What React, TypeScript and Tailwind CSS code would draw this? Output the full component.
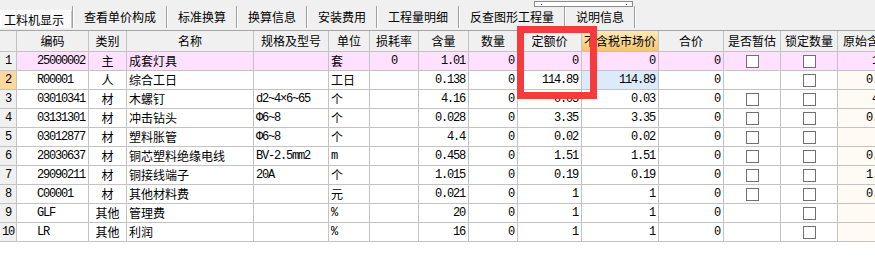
import * as React from "react";

type Row = {
  no: number;
  code: string;
  kind: string;
  name: string;
  spec: string;
  unit: string;
  loss: string;
  qty: string;
  amount: string;
  price: string;
  market: string;
  total: string;
  est: boolean;
  orig: string;
};

const rows: Row[] = [
  { no: 1, code: "25000002", kind: "主", name: "成套灯具", spec: "", unit: "套", loss: "0", qty: "1.01", amount: "0", price: "0", market: "0", total: "0", est: true, orig: "1.01" },
  { no: 2, code: "R00001", kind: "人", name: "综合工日", spec: "", unit: "工日", loss: "", qty: "0.138", amount: "0", price: "114.89", market: "114.89", total: "0", est: false, orig: "0.138" },
  { no: 3, code: "03010341", kind: "材", name: "木螺钉", spec: "d2~4×6~65", unit: "个", loss: "", qty: "4.16", amount: "0", price: "0.03", market: "0.03", total: "0", est: true, orig: "4.16" },
  { no: 4, code: "03131301", kind: "材", name: "冲击钻头", spec: "Φ6~8", unit: "个", loss: "", qty: "0.028", amount: "0", price: "3.35", market: "3.35", total: "0", est: true, orig: "0.028" },
  { no: 5, code: "03012877", kind: "材", name: "塑料胀管", spec: "Φ6~8", unit: "个", loss: "", qty: "4.4", amount: "0", price: "0.02", market: "0.02", total: "0", est: true, orig: "" },
  { no: 6, code: "28030637", kind: "材", name: "铜芯塑料绝缘电线", spec: "BV-2.5mm2", unit: "m", loss: "", qty: "0.458", amount: "0", price: "1.51", market: "1.51", total: "0", est: true, orig: "0.458" },
  { no: 7, code: "29090211", kind: "材", name: "铜接线端子", spec: "20A", unit: "个", loss: "", qty: "1.015", amount: "0", price: "0.19", market: "0.19", total: "0", est: true, orig: "1.015" },
  { no: 8, code: "C00001", kind: "材", name: "其他材料费", spec: "", unit: "元", loss: "", qty: "0.021", amount: "0", price: "1", market: "1", total: "0", est: true, orig: "0.021" },
  { no: 9, code: "GLF", kind: "其他", name: "管理费", spec: "", unit: "%", loss: "", qty: "20", amount: "0", price: "1", market: "1", total: "0", est: false, orig: "20" },
  { no: 10, code: "LR", kind: "其他", name: "利润", spec: "", unit: "%", loss: "", qty: "16", amount: "0", price: "1", market: "1", total: "0", est: false, orig: "16" },
];

const tabs = ["查看单价构成", "标准换算", "换算信息", "安装费用", "工程量明细", "反查图形工程量", "说明信息"];

const headers = ["", "编码", "类别", "名称", "规格及型号", "单位", "损耗率", "含量", "数量", "定额价", "不含税市场价", "合价", "是否暂估", "锁定数量", "原始含量"];

const cjk = "font-['Noto_Sans_CJK_SC',sans-serif]";
const mono = "font-['Liberation_Mono','Noto_Sans_CJK_SC',monospace] tracking-[-1.2px]";
const cell = "h-[19px] border-r border-b border-[#c3c3c3] flex items-center overflow-hidden whitespace-nowrap text-[12px] text-black";

function Check() {
  return <div className="size-[13px] border border-[#707070] bg-white" />;
}

export default function App() {
  return (
    <div className="relative w-[875px] h-[266px] overflow-hidden bg-white">
      {/* tab strip */}
      <div className={`h-[31px] bg-[#f0f0f0] border-b border-[#a5a5a5] flex items-end pb-[2px] ${cjk} text-[12px] text-black`}>
        <div className="w-[72px] h-[18px] pl-[3px] flex items-center bg-[#f9f9f9] border-t border-l border-white border-r border-r-[#c8c8c8] leading-none">
          工料机显示
        </div>
        {tabs.map((t) => (
          <div key={t} className="h-[22px] flex items-center">
            <div className="w-px h-full bg-[#a0a0a0]" />
            <div className="w-px h-full bg-white" />
            <div className="px-[10px] leading-none">{t}</div>
          </div>
        ))}
        <div className="h-[22px] flex">
          <div className="w-px h-full bg-[#a0a0a0]" />
          <div className="w-px h-full bg-white" />
        </div>
      </div>

      {/* grid */}
      <div className="grid w-max grid-cols-[17px_72px_38px_127px_75px_41px_49px_50px_49px_64px_77px_65px_57px_57px_62px]">
        {headers.map((h, i) => (
          <div
            key={i}
            className={`h-[21px] border-r border-b border-[#c3c3c3] flex items-center whitespace-nowrap overflow-hidden text-[12px] text-black ${cjk} ${
              i === 14 ? "justify-start pl-[5px]" : "justify-center"
            } ${i === 10 ? "bg-linear-to-b from-[#fdeab8] to-[#f4c36f]" : "bg-[#f0f0f0]"}`}
          >
            {h}
          </div>
        ))}

        {rows.map((r) => {
          const pink = r.no === 1;
          const bg = pink ? "bg-[#ffe1ff]" : "bg-white";
          return (
            <React.Fragment key={r.no}>
              <div className={`${cell} ${mono} justify-center ${r.no === 2 ? "bg-[#fdd99f]" : "bg-[#f0f0f0]"}`}>{r.no}</div>
              <div className={`${cell} ${mono} ${bg} pl-[20px]`}>{r.code}</div>
              <div className={`${cell} ${cjk} ${bg} justify-center`}>{r.kind}</div>
              <div className={`${cell} ${cjk} ${bg} pl-[2px]`}>{r.name}</div>
              <div className={`${cell} ${mono} ${bg} pl-[2px]`}>{r.spec}</div>
              <div className={`${cell} ${r.unit === "m" || r.unit === "%" ? mono : cjk} ${bg} pl-[2px]`}>{r.unit}</div>
              <div className={`${cell} ${mono} ${bg} justify-center`}>{r.loss}</div>
              <div className={`${cell} ${mono} ${bg} justify-end pr-[3px]`}>{r.qty}</div>
              <div className={`${cell} ${mono} ${bg} justify-end pr-[3px]`}>{r.amount}</div>
              <div className={`${cell} ${mono} ${bg} justify-end pr-[3px]`}>{r.price}</div>
              <div className={`${cell} ${mono} justify-end pr-[3px] ${r.no === 2 ? "bg-[#dcebfb]" : bg}`}>{r.market}</div>
              <div className={`${cell} ${mono} ${bg} justify-end pr-[3px]`}>{r.total}</div>
              <div className={`${cell} ${bg} justify-center`}>{r.est && <Check />}</div>
              <div className={`${cell} ${bg} justify-center`}><Check /></div>
              <div className={`${cell} ${mono} justify-end pr-[3px] ${pink ? bg : "bg-[#fffaf3]"}`}>{r.orig}</div>
            </React.Fragment>
          );
        })}
      </div>

      {/* small scroll indicator on the tab strip */}
      <div className="absolute left-[534px] top-[1px] w-[99px] h-[6px] border border-[#8a8a8a] bg-white">
        <div className="absolute left-[6px] top-[2px] size-px bg-[#1a3aa0]" />
        <div className="absolute right-[5px] top-[2px] size-px bg-[#1a3aa0]" />
      </div>

      {/* red highlight */}
      <div className="absolute left-[517px] top-[26px] w-[80px] h-[73px] border-[7px] border-[#f53b3b]" />
    </div>
  );
}
